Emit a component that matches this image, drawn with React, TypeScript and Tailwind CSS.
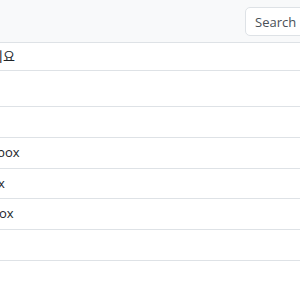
const rows = [
  { h: "h-[36px]", text: "", cut: "" },
  { h: "h-[31px]", text: "", cut: "" },
  { h: "h-[31px]", text: "box", cut: "-ml-[3px]" },
  { h: "h-[30px]", text: "x", cut: "-ml-[2px]" },
  { h: "h-[31px]", text: "ox", cut: "-ml-[1px]" },
  { h: "h-[31px]", text: "", cut: "" },
];

export default function App() {
  return (
    <div className="h-[300px] w-[300px] overflow-hidden bg-white font-['Open_Sans',sans-serif] text-[13px] text-[#212529]">
      <div className="flex h-[43px] items-center justify-end border-b border-[#dee2e6] bg-[#f8f9fa] pt-[1px]">
        <input
          className="-mr-[20px] h-[29px] w-[75px] rounded-[5px] border border-[#dee2e6] bg-white px-[9px] text-[13px] text-[#495057] placeholder:text-[#495057] outline-none"
          placeholder="Search"
        />
      </div>
      <div className="flex h-[28px] items-center overflow-hidden border-b border-[#dee2e6]">
        <span className="-ml-[9px] whitespace-nowrap font-['Open_Sans','Noto_Sans_CJK_KR',sans-serif]">
          이요
        </span>
      </div>
      {rows.map((row, i) => (
        <div
          key={i}
          className={`flex ${row.h} items-center overflow-hidden border-b border-[#dee2e6]`}
        >
          <span className={`${row.cut} whitespace-nowrap`}>{row.text}</span>
        </div>
      ))}
    </div>
  );
}
